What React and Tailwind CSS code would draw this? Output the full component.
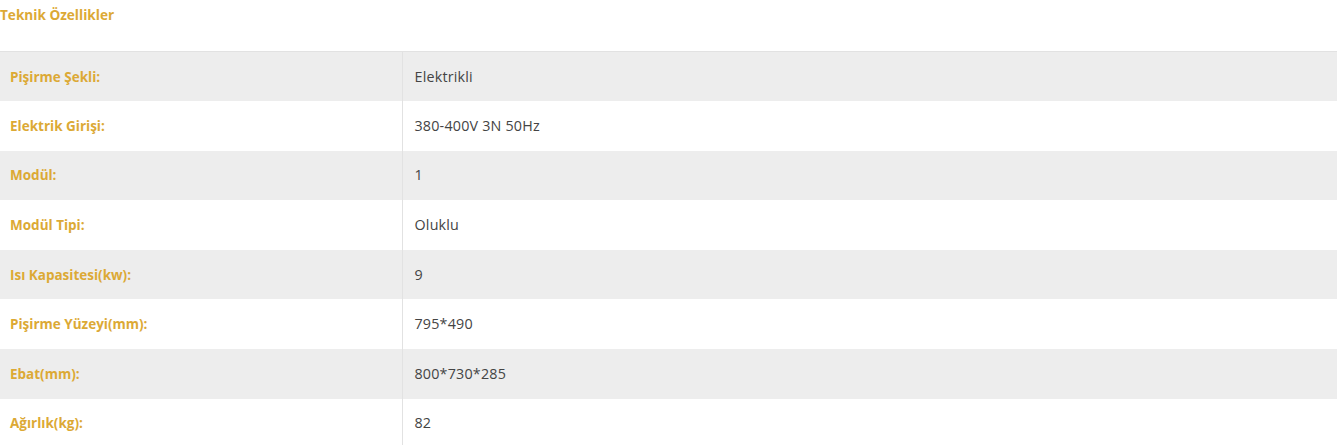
const specs = [
  ["Pişirme Şekli:", "Elektrikli"],
  ["Elektrik Girişi:", "380-400V 3N 50Hz"],
  ["Modül:", "1"],
  ["Modül Tipi:", "Oluklu"],
  ["Isı Kapasitesi(kw):", "9"],
  ["Pişirme Yüzeyi(mm):", "795*490"],
  ["Ebat(mm):", "800*730*285"],
  ["Ağırlık(kg):", "82"],
];

export default function App() {
  return (
    <div className="bg-white min-h-screen font-['Open_Sans',sans-serif] text-[14px]">
      <h3 className="pt-[5px] h-[51px] text-[13.6px] leading-[20px] font-bold text-[#dca935]">
        Teknik Özellikler
      </h3>
      <table className="w-full border-collapse border-t border-[#e2e2e2]">
        <tbody>
          {specs.map(([label, value], i) => (
            <tr key={label} className={i % 2 === 0 ? "bg-[#ededed]" : "bg-white"}>
              <td className="w-[402px] h-[49.6px] pl-[10px] pr-2 py-0 text-[13.5px] font-bold text-[#dca935] border-r border-[#e2e2e2] leading-[18px]">
                {label}
              </td>
              <td className="h-[49.6px] pl-[12px] py-0 text-[14.3px] tracking-[0.2px] text-[#444] leading-[18px]">
                {value}
              </td>
            </tr>
          ))}
        </tbody>
      </table>
    </div>
  );
}
